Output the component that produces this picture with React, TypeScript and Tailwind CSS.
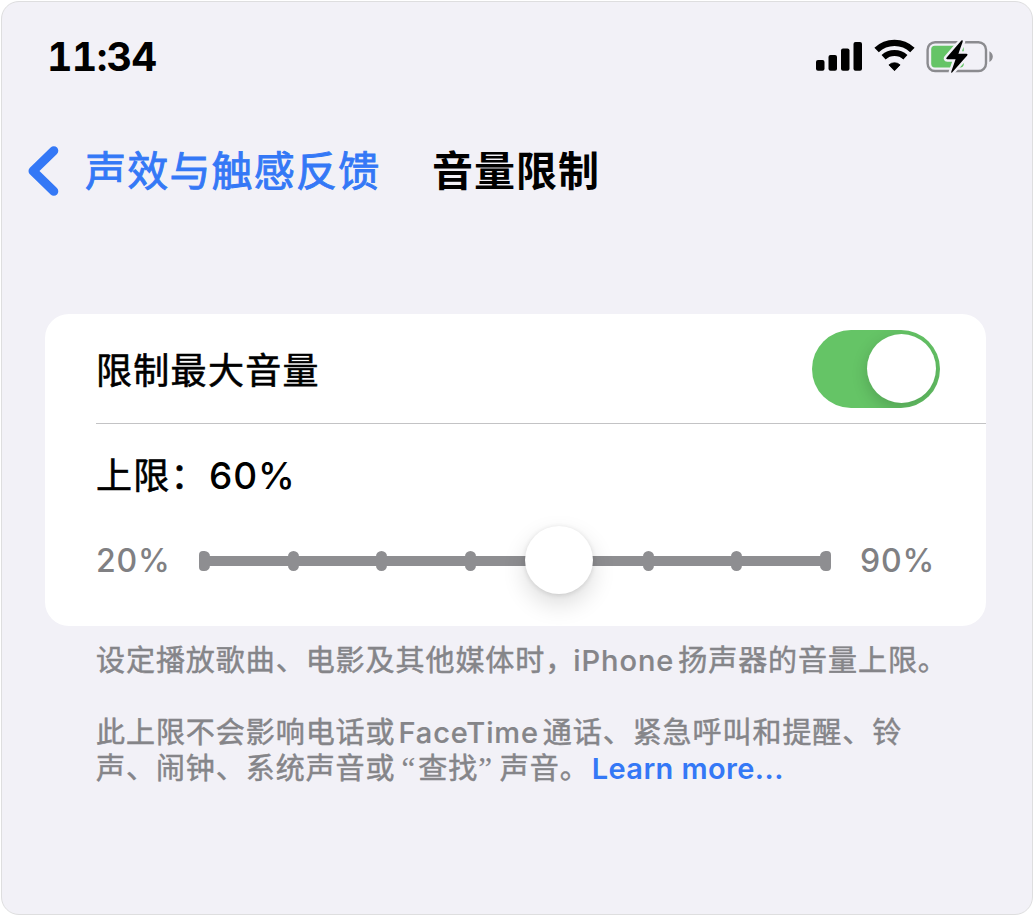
import { useState } from 'react'

const TICKS = [20, 30, 40, 50, 60, 70, 80, 90]

function SignalIcon() {
  return (
    <svg width="46" height="40" viewBox="0 0 46 40" fill="#000">
      <rect x="0" y="24" width="8.5" height="10.7" rx="2" />
      <rect x="12.5" y="19" width="8.5" height="15.7" rx="2" />
      <rect x="25" y="12.6" width="8.5" height="22.1" rx="2" />
      <rect x="37.5" y="6" width="8.5" height="28.7" rx="2" />
    </svg>
  )
}

function WifiIcon() {
  return (
    <svg width="41" height="40" viewBox="0 0 41 40" fill="none" stroke="#000">
      <path d="M2.6 14A26 26 0 0 1 38.4 14" strokeWidth="6.4" />
      <path d="M9.6 21.2A16 16 0 0 1 31.4 21.2" strokeWidth="6" />
      <path d="M20.5 34.7l-5.6-5.8a8.4 8.4 0 0 1 11.2 0z" fill="#000" strokeWidth="0.8" />
    </svg>
  )
}

function BatteryIcon() {
  return (
    <svg width="68" height="40" viewBox="0 0 68 40">
      <rect x="1.6" y="6.2" width="58.4" height="28.8" rx="7.5" fill="none" stroke="#8b8b8f" strokeWidth="2.4" />
      <path d="M63.4 15.2c2.1.9 3.4 3 3.4 5.4s-1.3 4.5-3.4 5.4z" fill="#8b8b8f" />
      <rect x="5.2" y="9.8" width="32.6" height="21.6" rx="3.6" fill="#65c466" />
      <path
        d="M35.4 4.6 20.7 21.6q-1.2 1.6.7 1.7h8.2l-4.3 12.2q-.5 1.8.8.9L41.2 19.5q1.1-1.6-.7-1.7h-8.1l4.3-12.1q.4-2-1.3-1.1z"
        fill="#000"
        stroke="#f2f1f7"
        strokeWidth="5"
        strokeLinejoin="round"
        paintOrder="stroke"
      />
    </svg>
  )
}

function VolumeSlider({ value }: { value: number }) {
  return (
    <div className="relative flex h-[70px] w-[632px] items-center">
      <div className="h-[10px] w-full bg-[#8e8e91]" />
      <div className="absolute inset-0 flex items-center justify-between">
        {TICKS.map((t) => (
          <span
            key={t}
            className="h-[20px] w-[11px] rounded-[5.5px] bg-[#8e8e91] first:rounded-l-[4px] last:rounded-r-[4px]"
          />
        ))}
      </div>
      <div
        className="absolute top-0 size-[68px] -translate-x-1/2 rounded-full bg-white shadow-[0_10px_24px_rgba(0,0,0,0.14),0_1px_5px_rgba(0,0,0,0.12)]"
        style={{ left: 5.5 + ((value - 20) / 70) * 621 }}
      />
    </div>
  )
}

export default function App() {
  const [limited, setLimited] = useState(true)

  return (
    <div
      lang="zh-CN"
      className="h-[916px] w-[1034px] bg-white p-px font-['Inter','Noto_Sans_CJK_SC',sans-serif]"
    >
      <div className="flex h-[914px] w-[1032px] flex-col overflow-hidden rounded-[18px] border border-[#dededf] bg-[#f2f1f7]">
        {/* Status bar */}
        <div className="mt-[34px] flex h-[40px] items-center pl-[45px] pr-[38px]">
          <span className="flex-1 pt-[2px] text-[39.5px] font-bold leading-[40px] tracking-[-0.7px] tabular-nums text-black">
            11:34
          </span>
          <SignalIcon />
          <div className="ml-[12px] flex">
            <WifiIcon />
          </div>
          <div className="ml-[11px] flex">
            <BatteryIcon />
          </div>
        </div>

        {/* Navigation */}
        <div className="mt-[64px] flex h-[62px] items-center pl-[25px]">
          <svg className="mb-[1px]" width="33" height="52" viewBox="0 0 33 52" fill="none">
            <path d="M26.8 5.7 6 26l20.8 20.3" stroke="#3478f6" strokeWidth="9" strokeLinecap="round" strokeLinejoin="round" />
          </svg>
          <span className="ml-[25px] w-[347px] whitespace-nowrap text-[41px] leading-[60px] tracking-[1.2px] text-[#3478f6] [-webkit-text-stroke:0.9px]">
            声效与触感反馈
          </span>
          <h1 className="whitespace-nowrap text-[41px] font-bold leading-[60px] tracking-[1px] text-black">音量限制</h1>
        </div>

        {/* Settings card */}
        <div className="ml-[43px] mt-[112px] h-[312px] w-[941px] rounded-[24px] bg-white pl-[51px]">
          <div className="flex h-[110px] items-center border-b border-[#c3c3c5] pr-[46px]">
            <span className="flex-1 pt-[4px] text-[36px] leading-[56px] tracking-[1.3px] text-black [-webkit-text-stroke:0.6px]">
              限制最大音量
            </span>
            <button
              role="switch"
              aria-checked={limited}
              aria-label="限制最大音量"
              onClick={() => setLimited(!limited)}
              className={`flex h-[78px] w-[128px] items-center overflow-hidden rounded-full px-[4px] ${limited ? 'justify-end bg-[#65c466]' : 'justify-start bg-[#e9e9eb]'}`}
            >
              <span className="size-[69px] rounded-full bg-white shadow-[0_5px_16px_rgba(0,0,0,0.18)]" />
            </button>
          </div>
          <div className="mt-[22px] flex h-[60px] items-center text-[36px] leading-[60px] text-black">
            <span className="w-[113px] whitespace-nowrap tracking-[1.3px] [-webkit-text-stroke:0.6px]">上限：</span>
            <span className="text-[37px] font-medium tracking-[0.9px]">60%</span>
          </div>
          <div className="mt-[20px] flex h-[70px] items-center text-[32px] font-medium text-[#808083]">
            <span className="w-[103px] tracking-[0.8px]">20%</span>
            <VolumeSlider value={60} />
            <span className="ml-[29px] tracking-[0.8px]">90%</span>
          </div>
        </div>

        {/* Footnote */}
        <div className="ml-[94px] mt-[17px] whitespace-nowrap text-[29px] leading-[36px] tracking-[0.95px] text-[#858589] [-webkit-text-stroke:0.5px]">
          <p>
            设定播放歌曲、电影及其他媒体时，
            <span className="-ml-[2px] mr-[4px] font-medium [-webkit-text-stroke:0.2px]">iPhone</span>扬声器的音量上限。
          </p>
          <p className="mt-[36px]">
            此上限不会影响电话或
            <span className="ml-[3px] mr-[4px] font-medium tracking-[0.85px] [-webkit-text-stroke:0.2px]">FaceTime</span>
            通话、紧急呼叫和提醒、铃
            <br />
            声、闹钟、系统声音或
            <span className="ml-[6px] mr-[2px] font-['Liberation_Serif',serif] text-[31px] leading-none [-webkit-text-stroke:0.2px]">“</span>查找
            <span className="mr-[7px] font-['Liberation_Serif',serif] text-[31px] leading-none [-webkit-text-stroke:0.2px]">”</span>声音。
            <a className="ml-[2px] font-semibold tracking-[0.4px] text-[#3478f6] [-webkit-text-stroke:0]">Learn more...</a>
          </p>
        </div>
      </div>
    </div>
  )
}
